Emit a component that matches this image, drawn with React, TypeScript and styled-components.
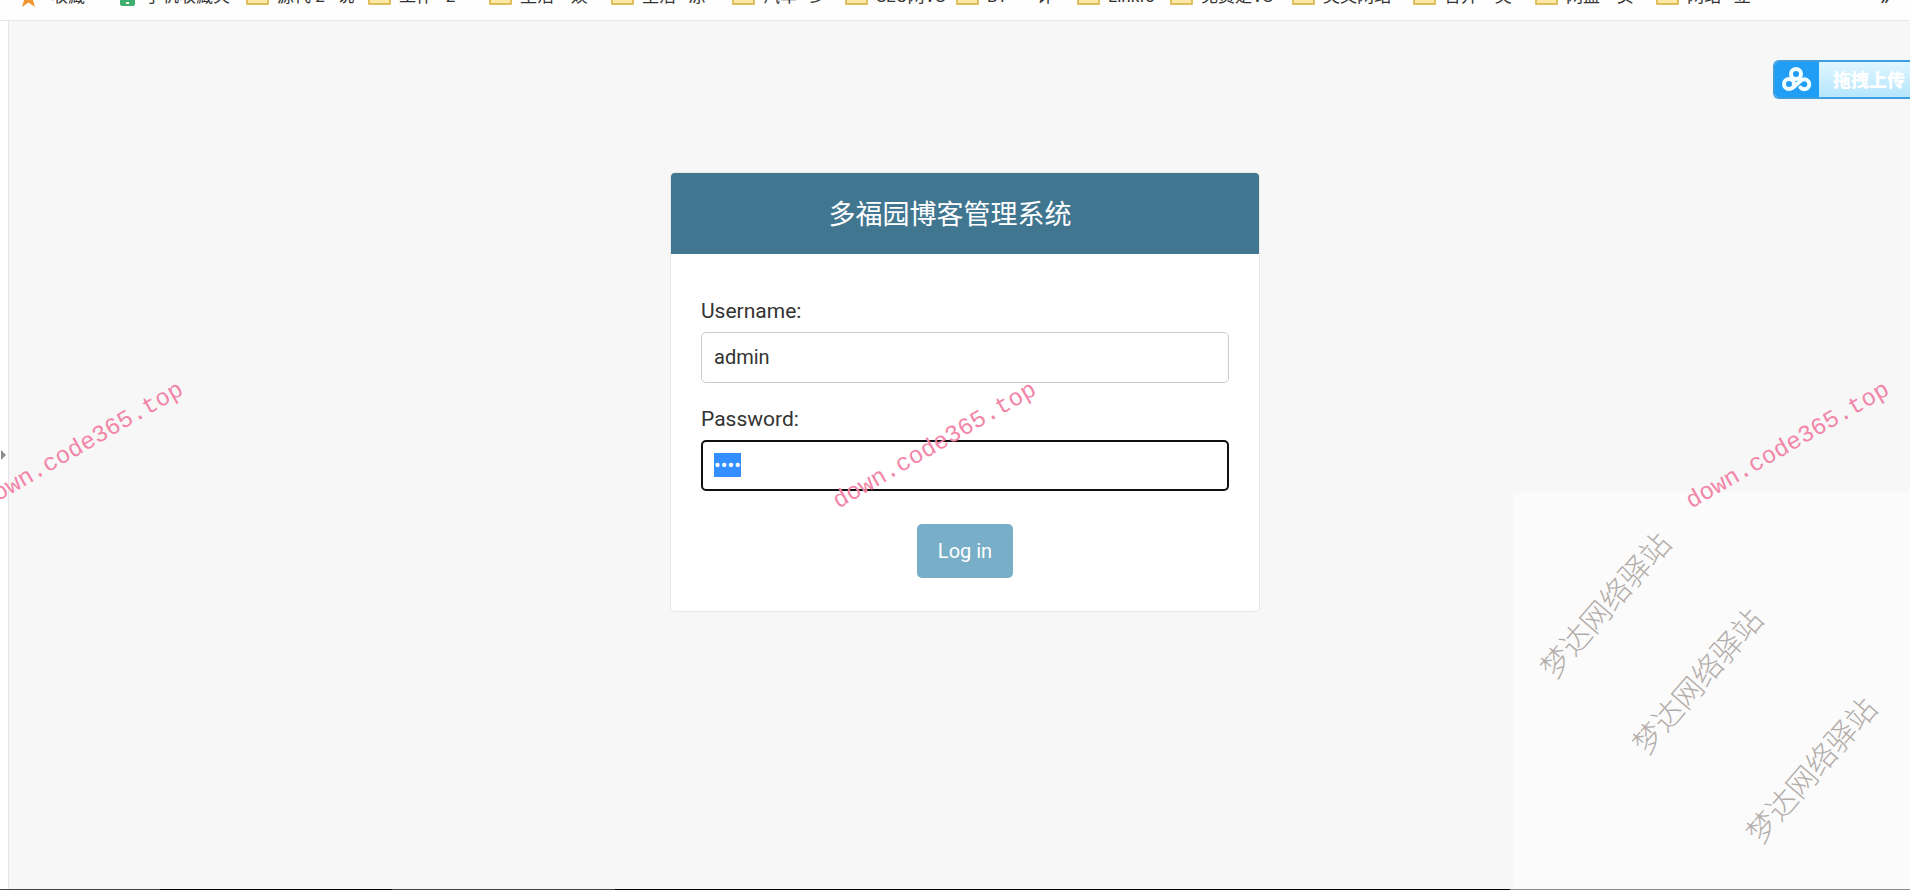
import React, { useEffect, useRef } from "react";
import styled, { createGlobalStyle } from "styled-components";

const GlobalStyle = createGlobalStyle`
  *, *::before, *::after { box-sizing: border-box; }
  html, body { margin: 0; }
  body {
    background: #f7f7f7;
    color: #333;
    font-family: Roboto, "Noto Sans CJK SC", sans-serif;
    font-size: 20px;
  }
`;

const Page = styled.div`
  position: relative;
  display: flex;
  flex-direction: column;
  min-height: 100vh;
  overflow: hidden;
`;

const BookmarkBar = styled.nav`
  display: flex;
  align-items: flex-end;
  height: 21px;
  padding: 0 20px 13px 20px;
  overflow: hidden;
  background: #fefefe;
  border-bottom: 1px solid #e8e8e8;
`;

const Bookmark = styled.a<{ $width: number; $gap?: number }>`
  display: flex;
  flex: none;
  align-items: flex-end;
  gap: ${(p) => p.$gap ?? 8}px;
  width: ${(p) => p.$width}px;
  height: 20px;
  color: #333;
  font-size: 17px;
  line-height: 24px;
  white-space: pre;
  text-decoration: none;

  svg { flex: none; }
  span { margin-bottom: -1px; }
`;

const MoreButton = styled.button`
  margin-left: auto;
  padding: 0;
  border: 0;
  background: none;
  color: #333;
  font: 500 20px/20px Roboto, sans-serif;
`;

const Body = styled.div`
  display: flex;
  flex: 1;
`;

const SideRail = styled.aside`
  display: flex;
  align-items: center;
  width: 9px;
  background: #fff;
  border-right: 1px solid #e4e4e4;
`;

const Main = styled.main`
  display: flex;
  flex: 1;
  justify-content: center;
  align-items: flex-start;
  padding: 151px 12px 40px 23px;
`;

const Card = styled.form`
  width: 100%;
  max-width: 590px;
  overflow: hidden;
  background: #fff;
  border: 1px solid #e8e8e8;
  border-radius: 5px;
`;

const CardHeader = styled.header`
  padding: 22px 30px 18px 0;
  background: #417690;
  color: #fff;
  text-align: center;
`;

const Title = styled.h1`
  margin: 0;
  font-size: 27px;
  font-weight: 400;
  line-height: 41px;
`;

const CardBody = styled.div`
  display: flex;
  flex-direction: column;
  padding: 42px 30px 33px;
`;

const Field = styled.div`
  display: flex;
  flex-direction: column;
  gap: 6px;
  margin-bottom: 21px;
`;

const Label = styled.label`
  font-size: 21px;
  line-height: 30px;
`;

const TextInput = styled.input`
  width: 100%;
  height: 51px;
  padding: 0 12px 2px;
  border: 1px solid #ccc;
  border-radius: 5px;
  outline: none;
  background: #fff;
  color: #333;
  font: 20px/24px Roboto, sans-serif;

  &:focus {
    padding: 0 11px 2px;
    border: 2px solid #101010;
  }
  &::selection { background: #338fff; color: #fff; }
`;

const SubmitButton = styled.button`
  align-self: center;
  margin-top: 12px;
  padding: 15px 21px;
  border: 0;
  border-radius: 5px;
  background: #79aec8;
  color: #fff;
  font: 20px/24px Roboto, sans-serif;
`;

const TaskbarEdge = styled.footer`
  height: 1px;
  background: linear-gradient(
    90deg,
    #444 0 160px, #000 160px 392px, #444 392px 615px, #000 615px 1510px, #8c8c8c 1510px
  );
`;

const UploadBadge = styled.button`
  position: absolute;
  top: 60px;
  right: 0;
  display: flex;
  width: 137px;
  height: 39px;
  padding: 0;
  overflow: hidden;
  border: 2px solid #3d9fdf;
  border-right: 0;
  border-radius: 6px 0 0 6px;
  background: linear-gradient(#e0f6ff, #b5e6fd);
  color: #fff;
  font: 900 18px/35px "Noto Sans CJK SC", sans-serif;
  white-space: nowrap;
`;

const BadgeIcon = styled.span`
  display: flex;
  flex: none;
  align-items: center;
  justify-content: center;
  width: 44px;
  height: 100%;
  margin-right: 14px;
  background: #209df5;
`;

const NoticePanel = styled.div`
  position: absolute;
  top: 492px;
  right: 0;
  bottom: 1px;
  width: 397px;
  background: #fbfbfb;
`;

const Watermark = styled.span<{ $x: number; $y: number }>`
  position: absolute;
  left: ${(p) => p.$x}px;
  top: ${(p) => p.$y}px;
  white-space: nowrap;
  pointer-events: none;
`;

const SiteMark = styled(Watermark)`
  color: #f285a8;
  font: 24px/28px "Liberation Mono", monospace;
  transform: translate(-50%, -50%) rotate(-30deg);
`;

const StationMark = styled(Watermark)`
  color: #b3adaa;
  font: 300 30px/36px "Noto Sans CJK SC", sans-serif;
  transform: translate(-50%, -50%) rotate(-49deg);
`;

const StarIcon = () => (
  <svg width="17" height="18" viewBox="0 0 17 18" aria-hidden="true">
    <path d="M8.500 0l2.400 6H17l-4.300 4.400L15 18l-6.500-4.500L2 18l2.300-7.600L0 6h6.100z" fill="#f0962f" />
  </svg>
);

const PhoneIcon = () => (
  <svg width="15" height="20" viewBox="0 0 15 20" aria-hidden="true">
    <rect width="15" height="19" rx="2" fill="#3fae6c" />
    <rect x="2" y="2" width="11" height="11" fill="#fff" />
    <rect x="6" y="15" width="3" height="2" fill="#fff" />
  </svg>
);

const FolderIcon = () => (
  <svg width="23" height="20" viewBox="0 0 23 20" aria-hidden="true">
    <path d="M1 17V2h8l2 3h11v12z" fill="#fce9a5" stroke="#dfbd5c" strokeWidth="2" strokeLinejoin="round" />
  </svg>
);

const CloudIcon = () => (
  <svg width="30" height="25" viewBox="0 0 30 25" fill="none" stroke="#f2fdff" strokeWidth="4" strokeLinecap="round" aria-hidden="true">
    <circle cx="14" cy="7" r="5" />
    <circle cx="7" cy="17" r="5" />
    <path d="M11 20.500L19 13.500a5 5 0 1 1-.5 7" />
  </svg>
);

const folders: { name: string; width: number }[] = [
  { name: "源代 2   说", width: 122 },
  { name: "工作   2", width: 121 },
  { name: "生活    娱", width: 122 },
  { name: "生活   凉", width: 121 },
  { name: "汽车   少", width: 113 },
  { name: "SEO网VS", width: 111 },
  { name: "BT       计", width: 121 },
  { name: "Linkfo", width: 93 },
  { name: "免费是VS", width: 122 },
  { name: "英文网站", width: 121 },
  { name: "合并    英", width: 122 },
  { name: "网盘    页", width: 121 },
  { name: "网站   立", width: 121 },
];

const siteMarks = [82, 935, 1788];
const stationMarks = [
  { x: 91, y: 112 },
  { x: 183, y: 188 },
  { x: 297, y: 277 },
];

export default function App() {
  const password = useRef<HTMLInputElement>(null);

  useEffect(() => {
    password.current?.focus();
    password.current?.select();
  }, []);

  return (
    <>
      <GlobalStyle />
      <Page>
        <BookmarkBar>
          <Bookmark href="#" $width={100} $gap={14}><StarIcon /><span>收藏</span></Bookmark>
          <Bookmark href="#" $width={126} $gap={10}><PhoneIcon /><span>手机收藏夹</span></Bookmark>
          {folders.map((f, i) => (
            <Bookmark key={i} href="#" $width={f.width}><FolderIcon /><span>{f.name}</span></Bookmark>
          ))}
          <MoreButton type="button">»</MoreButton>
        </BookmarkBar>
        <Body>
          <SideRail>
            <svg width="6" height="10" viewBox="0 0 6 10" aria-hidden="true">
              <path d="M1 0l5 5-5 5z" fill="#8d8d8d" />
            </svg>
          </SideRail>
          <Main>
            <Card onSubmit={(e) => e.preventDefault()}>
              <CardHeader><Title>多福园博客管理系统</Title></CardHeader>
              <CardBody>
                <Field>
                  <Label htmlFor="username">Username:</Label>
                  <TextInput id="username" type="text" defaultValue="admin" />
                </Field>
                <Field>
                  <Label htmlFor="password">Password:</Label>
                  <TextInput id="password" type="password" defaultValue="1234" ref={password} />
                </Field>
                <SubmitButton type="submit">Log in</SubmitButton>
              </CardBody>
            </Card>
          </Main>
        </Body>
        <TaskbarEdge />
        <NoticePanel>
          {stationMarks.map((m) => (
            <StationMark key={m.x} $x={m.x} $y={m.y}>梦达网络驿站</StationMark>
          ))}
        </NoticePanel>
        <UploadBadge type="button"><BadgeIcon><CloudIcon /></BadgeIcon>拖拽上传</UploadBadge>
        {siteMarks.map((x) => (
          <SiteMark key={x} $x={x} $y={446}>down.code365.top</SiteMark>
        ))}
      </Page>
    </>
  );
}
